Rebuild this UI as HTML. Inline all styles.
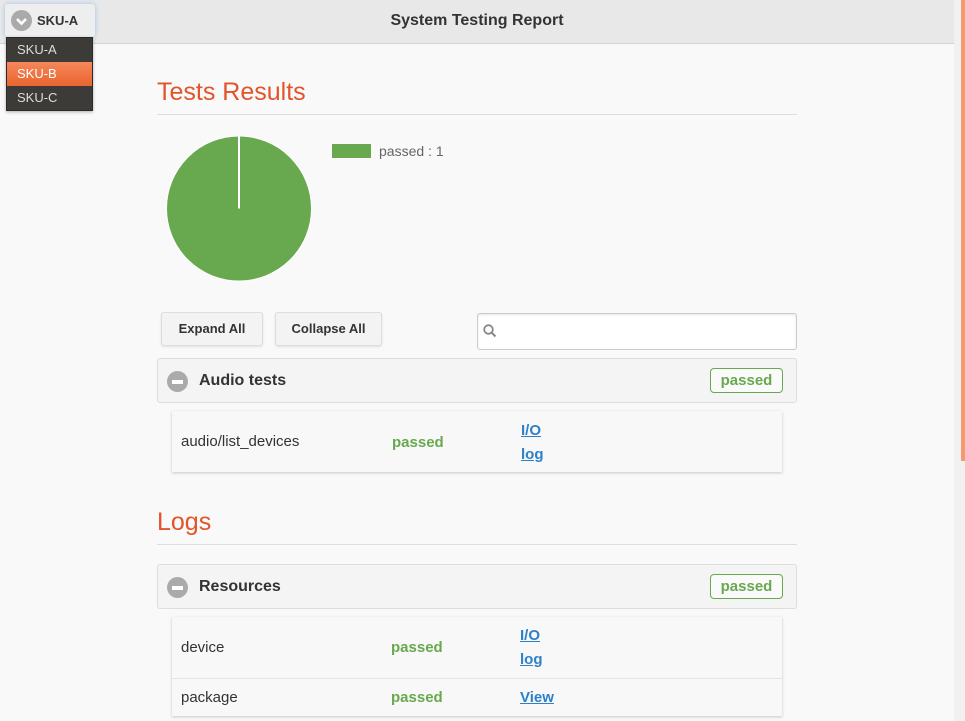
<!DOCTYPE html>
<html><head><meta charset="utf-8"><style>
*{margin:0;padding:0;box-sizing:border-box}
body{width:965px;height:721px;overflow:hidden;background:#f9f9f9;font-family:"Liberation Sans",sans-serif;position:relative;color:#333}
.a{position:absolute}
.hdr{left:0;top:0;width:954px;height:44px;background:#e8e8e8;border-bottom:1px solid #d4d4d4}
.title{left:0;width:954px;top:12px;text-align:center;font-weight:bold;font-size:16px;color:#333}
.sku{left:5px;top:4px;width:90px;height:33px;background:#eee;border-radius:3px;box-shadow:0 0 5px #9cc3e8}
.dd{left:6px;top:37px;width:87px;height:74px;background:#3c3b37;border:1px solid #2a2a28;box-shadow:0 1px 3px rgba(0,0,0,.3)}
.dd div{height:24px;line-height:24px;padding-left:10px;color:#ddd;font-size:13px}
.dd .sel{background:linear-gradient(#f5875a,#e9642f);color:#fff}
h2{position:absolute;font-weight:normal;font-size:25px;color:#e2542a}
.hr{position:absolute;left:157px;width:640px;height:1px;background:#ddd}
.btn{position:absolute;top:312px;height:34px;border:1px solid #ddd;border-radius:3px;background:#f3f3f3;font-weight:bold;font-size:13px;line-height:32px;text-align:center;box-shadow:0 1px 2px rgba(0,0,0,.1)}
.grp{position:absolute;left:157px;width:640px;height:45px;background:#f4f4f4;border:1px solid #ddd;border-radius:3px}
.grp .ic{position:absolute;left:9px;top:12px;width:21px;height:21px;border-radius:50%;background:#aaa}
.grp .ic:after{content:"";position:absolute;left:5px;top:8.5px;width:11px;height:4px;background:#fff}
.grp .nm{position:absolute;left:41px;top:13px;font-weight:bold;font-size:16px;color:#333}
.badge{position:absolute;right:13px;top:9px;height:25px;width:73px;border:1px solid #68a84e;border-radius:4px;color:#68a84e;font-weight:bold;font-size:15px;line-height:24px;text-align:center;background:#fafafa}
.tbl{position:absolute;left:172px;width:610px;background:#f8f8f8;box-shadow:0 1px 3px rgba(0,0,0,.2)}
.row{position:relative;border-bottom:1px solid #e5e5e5}
.row span{position:absolute;font-size:15px}
.ps{color:#68a84e;font-weight:bold}
.lk{color:#2e80c8;font-weight:bold;text-decoration:underline}
</style></head><body>
<div class="a hdr"></div>
<div class="a title">System Testing Report</div>
<div class="a sku">
 <div class="a" style="left:6px;top:6px;width:21px;height:21px;border-radius:50%;background:#aaa"></div>
 <svg class="a" style="left:6px;top:6px" width="21" height="21"><path d="M6 9l4.5 4.5L15 9" stroke="#fff" stroke-width="2.6" fill="none"/></svg>
 <div class="a" style="left:32px;top:9px;font-weight:bold;font-size:13px;color:#333">SKU-A</div>
</div>
<div class="a dd"><div>SKU-A</div><div class="sel">SKU-B</div><div>SKU-C</div></div>

<h2 style="left:157px;top:78px">Tests Results</h2>
<div class="hr" style="top:114px"></div>
<svg class="a" style="left:165px;top:135px" width="150" height="150"><circle cx="74" cy="73.5" r="72.5" fill="#68a84e" stroke="#fff" stroke-width="1"/><line x1="74" y1="1" x2="74" y2="73.5" stroke="#fff" stroke-width="2"/></svg>
<div class="a" style="left:332px;top:144px;width:39px;height:14px;background:#68a84e"></div>
<div class="a" style="left:379px;top:143px;font-size:14px;color:#666">passed : 1</div>

<div class="btn" style="left:161px;width:102px">Expand All</div>
<div class="btn" style="left:275px;width:107px">Collapse All</div>
<div class="a" style="left:477px;top:313px;width:320px;height:37px;background:#fff;border:1px solid #ccc;border-radius:3px;box-shadow:inset 0 1px 2px rgba(0,0,0,.1)"></div>
<svg class="a" style="left:482px;top:323px" width="16" height="16"><circle cx="6.5" cy="6.5" r="4.3" stroke="#888" stroke-width="1.8" fill="none"/><path d="M9.5 9.5l4 4" stroke="#888" stroke-width="2"/></svg>

<div class="grp" style="top:358px"><div class="ic"></div><div class="nm">Audio tests</div><div class="badge">passed</div></div>
<div class="tbl" style="top:411px;height:61px"><div class="row" style="height:61px;border:none">
 <span style="left:9px;top:22px">audio/list_devices</span>
 <span class="ps" style="left:220px;top:23px">passed</span>
 <span class="lk" style="left:349px;top:11px">I/O</span>
 <span class="lk" style="left:349px;top:35px">log</span>
</div></div>

<h2 style="left:157px;top:508px">Logs</h2>
<div class="hr" style="top:544px"></div>
<div class="grp" style="top:564px"><div class="ic"></div><div class="nm">Resources</div><div class="badge">passed</div></div>
<div class="tbl" style="top:617px;height:99px">
 <div class="row" style="height:62px">
  <span style="left:9px;top:22px">device</span>
  <span class="ps" style="left:219px;top:22px">passed</span>
  <span class="lk" style="left:348px;top:10px">I/O</span>
  <span class="lk" style="left:348px;top:34px">log</span>
 </div>
 <div class="row" style="height:37px;border:none">
  <span style="left:9px;top:10px">package</span>
  <span class="ps" style="left:219px;top:10px">passed</span>
  <span class="lk" style="left:348px;top:10px">View</span>
 </div>
</div>

<div class="a" style="left:954px;top:0;width:11px;height:721px;background:#f2f1f0"></div>
<div class="a" style="left:961px;top:0;width:4px;height:461px;background:#f39a6e"></div>
</body></html>
